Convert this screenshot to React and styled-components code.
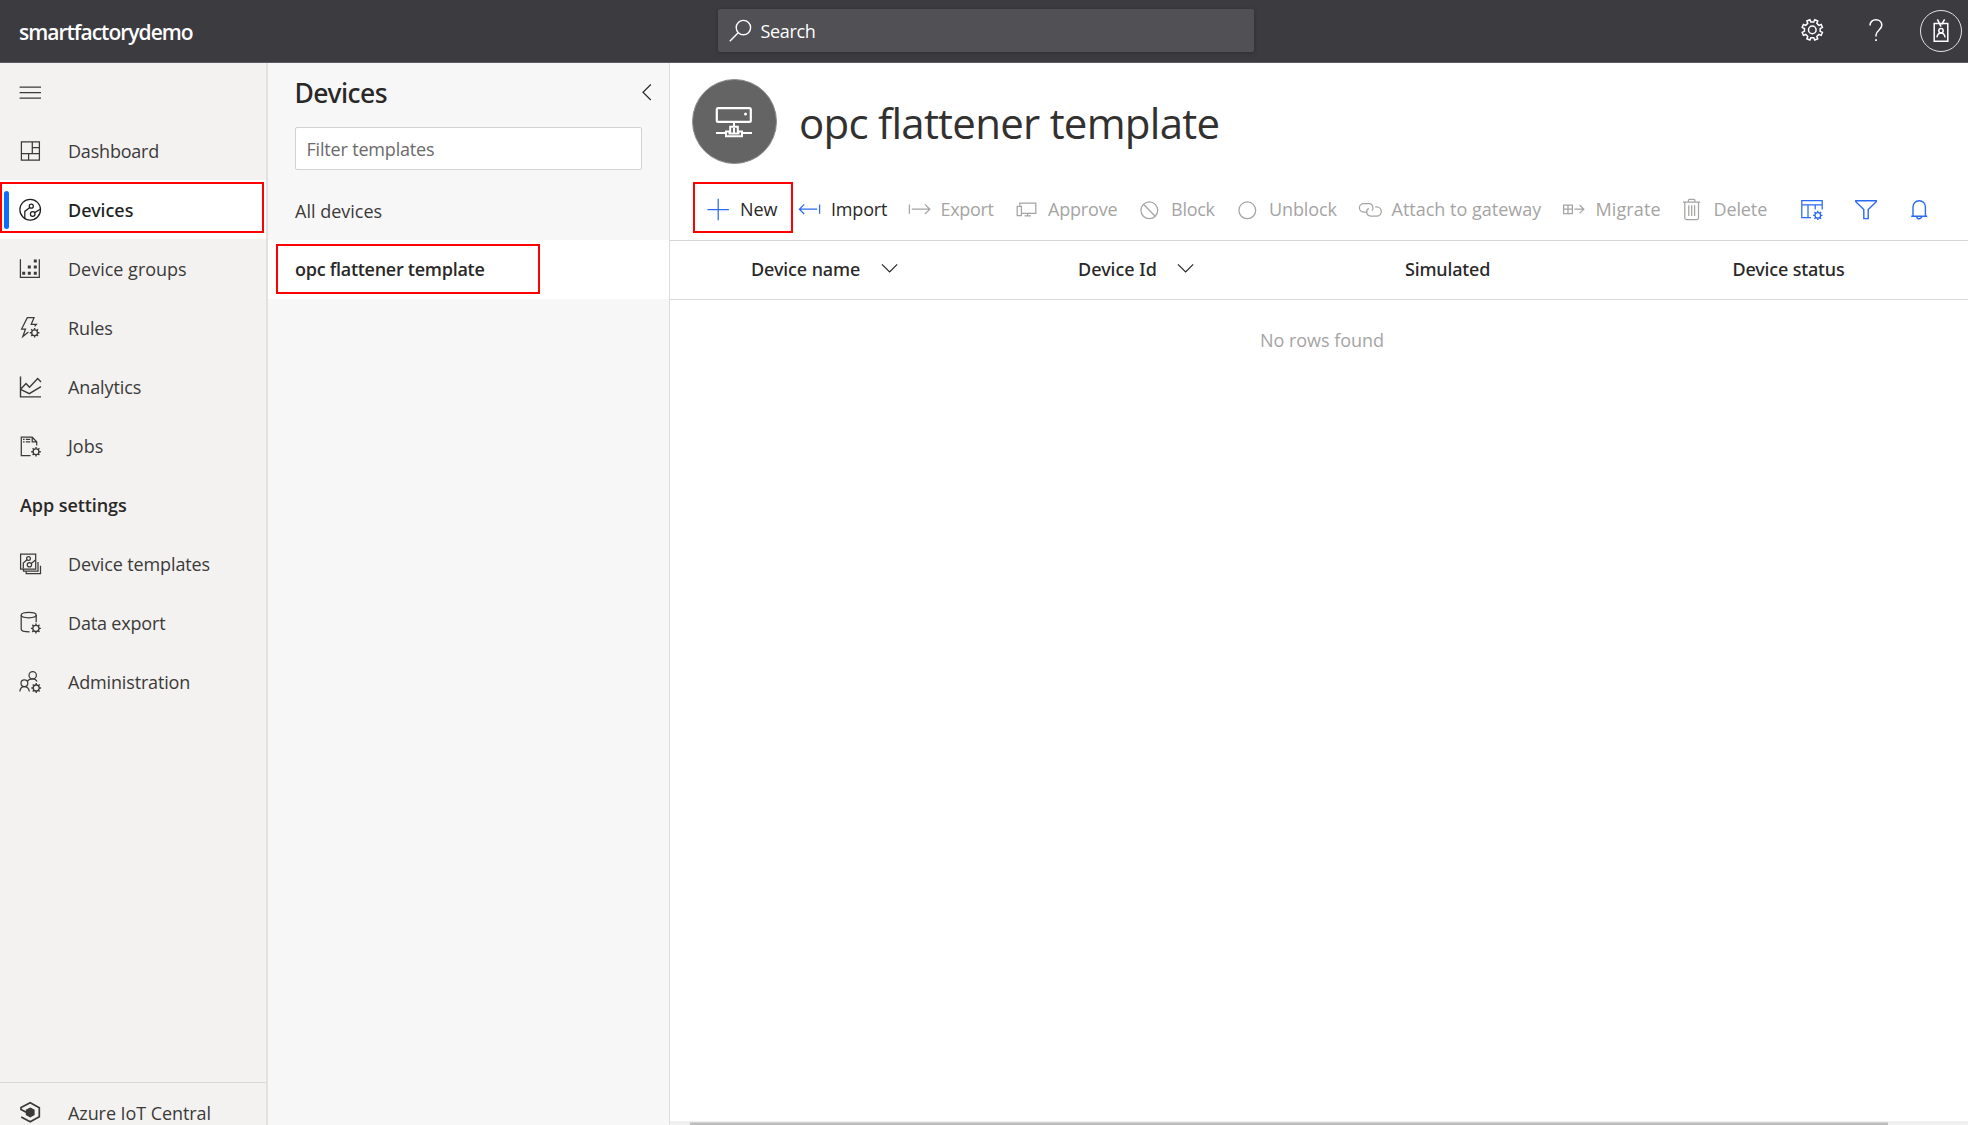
import React from "react";
import styled, { createGlobalStyle } from "styled-components";

const regular = `"Open Sans", "Noto Sans", sans-serif`;
const medium = `"Noto Sans", "Open Sans", sans-serif`;

const GlobalStyle = createGlobalStyle`
  *, *::before, *::after { box-sizing: border-box; }
  html, body, #root { height: 100%; }
  body {
    margin: 0;
    overflow: hidden;
    background: #fff;
    color: #3b3a39;
    font-family: ${regular};
    font-size: 18px;
    line-height: 24px;
  }
`;

/* ---------- shared parts ---------- */

const Label = styled.span`
  display: block;
  white-space: pre;
  letter-spacing: ${(p) => p.$ls || 0}px;
  font-family: ${(p) => (p.$strong ? medium : regular)};
  font-weight: ${(p) => (p.$bold ? 600 : p.$strong ? 500 : 400)};
`;

const Glyph = styled.svg`
  display: block;
  flex: none;
  width: ${(p) => p.$w || 26}px;
  height: ${(p) => p.$h || 26}px;
  fill: none;
  stroke: currentColor;
  stroke-width: ${(p) => p.$sw || 1.25};
  overflow: visible;
`;

const polar = (cx, cy, r, a) =>
  `${(cx + r * Math.cos(a)).toFixed(2)} ${(cy + r * Math.sin(a)).toFixed(2)}`;

function gearOutline(cx, cy, inner, outer, teeth) {
  const step = (Math.PI * 2) / teeth;
  const pts = [];
  for (let i = 0; i < teeth; i++) {
    const a = i * step - Math.PI / 2 + step / 2;
    pts.push(polar(cx, cy, inner, a - step * 0.27));
    pts.push(polar(cx, cy, outer, a - step * 0.2));
    pts.push(polar(cx, cy, outer, a + step * 0.2));
    pts.push(polar(cx, cy, inner, a + step * 0.27));
  }
  return `M${pts.join("L")}Z`;
}

function MiniGear({ cx, cy, r = 3, rot = 0 }) {
  const teeth = Array.from({ length: 8 }, (_, i) => {
    const a = (i * Math.PI) / 4 + rot;
    return `M${polar(cx, cy, r, a)}L${polar(cx, cy, r + 1.9, a)}`;
  }).join("");
  return (
    <>
      <circle cx={cx} cy={cy} r={r} strokeWidth="1.3" />
      <path d={teeth} strokeWidth="1.4" />
    </>
  );
}

/* ---------- top bar ---------- */

const TopBar = styled.header`
  display: flex;
  align-items: flex-start;
  height: 63px;
  flex: none;
  background: #3c3b40;
  border-bottom: 1px solid #5d5b63;
  color: #fff;
`;

const Brand = styled.div`
  width: 718px;
  padding: 17px 0 0 19px;
  font-size: 21px;
  line-height: 30px;
`;

const SearchBox = styled.div`
  display: flex;
  align-items: center;
  width: 536px;
  height: 43px;
  margin-top: 9px;
  padding-left: 11px;
  gap: 8.5px;
  border-radius: 2px;
  background: #505055;
  box-shadow: 0 1px 4px rgba(0, 0, 0, 0.25);
`;

const TopActions = styled.div`
  display: flex;
  align-items: center;
  height: 61px;
  margin-left: auto;
  padding-right: 6px;
`;

const TopAction = styled.div`
  width: ${(p) => p.$w}px;
`;

const Avatar = styled.div`
  display: grid;
  place-items: center;
  width: 42px;
  height: 42px;
  border: 1.5px solid #e4e4e4;
  border-radius: 50%;
`;

/* ---------- body ---------- */

const Shell = styled.div`
  display: flex;
  flex-direction: column;
  height: 1125px;
  overflow: hidden;
`;

const Body = styled.div`
  display: flex;
  flex: 1;
  min-height: 0;
`;

const Nav = styled.nav`
  display: flex;
  flex-direction: column;
  width: 268px;
  flex: none;
  background: #f3f2f1;
  border-right: 2px solid #e1e1e1;
`;

const MenuToggle = styled.div`
  display: flex;
  align-items: center;
  height: 58px;
  padding: 0 0 1px 18px;
`;

const NavRow = styled.div`
  position: relative;
  display: flex;
  align-items: center;
  flex: none;
  height: 59px;
  padding: 0 0 0 18px;
  gap: 24px;
  background: ${(p) => (p.$active ? "#fff" : "transparent")};
  color: ${(p) => (p.$active ? "#201f1e" : "#3b3a39")};

  & > svg { margin-top: 1px; }
`;

const ActiveBar = styled.span`
  position: absolute;
  left: 4px;
  top: 11px;
  width: 5px;
  height: 38px;
  border-radius: 3px;
  background: #0f6bff;
`;

const Callout = styled.span`
  position: absolute;
  left: ${(p) => p.$x}px;
  top: ${(p) => p.$y}px;
  width: ${(p) => p.$w}px;
  height: ${(p) => p.$h}px;
  border: 2px solid #f00;
  pointer-events: none;
`;

const SectionTitle = styled.div`
  height: 59px;
  padding: 18px 0 0 20px;
  color: #292827;
`;

const NavFooter = styled.div`
  height: 43px;
  margin-top: auto;
  overflow: hidden;
  border-top: 1px solid #dad9d8;
`;

/* ---------- template panel ---------- */

const Panel = styled.aside`
  display: flex;
  flex-direction: column;
  width: 402px;
  flex: none;
  background: #f7f7f7;
  border-right: 1px solid #dcdcdc;
`;

const PanelHead = styled.div`
  display: flex;
  justify-content: space-between;
  height: 64px;
  padding: 12px 17px 0 26.5px;
  color: #292827;
  font-size: 26.5px;
  line-height: 36px;

  & > svg { margin-top: 1px; }
`;

const FilterField = styled.div`
  display: flex;
  align-items: center;
  height: 43px;
  margin: 0 27px 18px 26.5px;
  padding: 0 0 0 11px;
  border: 1px solid #d2d2d2;
  border-radius: 2px;
  background: #fff;
  color: #6b6a69;
`;

const TemplateRow = styled.div`
  position: relative;
  display: flex;
  align-items: center;
  height: ${(p) => (p.$active ? 59 : 52)}px;
  padding: 0 0 ${(p) => (p.$active ? 1 : 7)}px 27px;
  background: ${(p) => (p.$active ? "#fff" : "transparent")};
  color: ${(p) => (p.$active ? "#292827" : "#3b3a39")};
`;

/* ---------- main ---------- */

const Main = styled.main`
  display: flex;
  flex-direction: column;
  flex: 1;
  min-width: 0;
`;

const TitleRow = styled.div`
  display: flex;
  height: 117px;
  flex: none;
  padding: 16px 0 0 22px;
  gap: 22px;
  color: #323130;
`;

const DeviceBadge = styled.div`
  display: grid;
  place-items: center;
  width: 85px;
  height: 85px;
  padding: 4px 2px 0 0;
  border: 1px solid #8e8e8e;
  border-radius: 50%;
  background: #646464;
  color: #fff;
`;

const Title = styled.h1`
  margin: 0;
  padding-top: 16px;
  font-size: 42px;
  font-weight: 400;
  line-height: 56px;
`;

const Toolbar = styled.div`
  position: relative;
  display: flex;
  align-items: center;
  height: 61px;
  flex: none;
  padding-left: 36px;
  border-bottom: 1px solid #d6d6d6;
`;

const Command = styled.div`
  display: flex;
  align-items: center;
  flex: none;
  width: ${(p) => p.$w}px;
  margin-top: -2px;
  gap: ${(p) => p.$gap ?? 9}px;
  color: ${(p) => (p.$disabled ? "#a5a4a3" : "#292827")};

  & > svg { color: ${(p) => (p.$disabled ? "#a5a4a3" : "#2b6af5")}; }
`;

const HeadRow = styled.div`
  display: grid;
  grid-template-columns: 327px 327px 327.5px 1fr;
  align-items: center;
  height: 59px;
  flex: none;
  padding: 0 0 2px 81px;
  border-bottom: 1px solid #d9d9d9;
  color: #292827;
`;

const HeadCell = styled.div`
  display: flex;
  align-items: center;
  gap: 20.5px;
`;

const Empty = styled.div`
  display: flex;
  flex: 1;
  justify-content: center;
  padding: 28px 0 0 6px;
  color: #a5a4a3;
`;

const ScrollTrack = styled.div`
  height: 4px;
  flex: none;
  padding: 1px 80px 0 20px;
  background: #f0f0f0;
`;

const ScrollThumb = styled.div`
  height: 3px;
  background: #bdbdbd;
  border-top: 1px solid #d2d2d2;
`;

/* ---------- navigation data ---------- */

const navIcons = {
  dashboard: (
    <path d="M3.4 3.8H21.4V22H3.4ZM14.3 3.8V15.7M14.3 9.5H21.4M3.4 15.7H21.4M10.6 15.7V22" />
  ),
  devices: (
    <>
      <circle cx="12.2" cy="12.7" r="10.3" />
      <circle cx="13.3" cy="9.2" r="2" />
      <circle cx="14.7" cy="17" r="2.3" />
      <path d="M6.8 21.3V14.4L11.8 10.6M16.6 15.6L22.2 12.2" />
    </>
  ),
  groups: (
    <>
      <path d="M2.4 3.3V21.3H21.3V3.3" />
      <path
        d="M15.8 5H18.8M9.8 11H12.8M15.8 11H18.8M4.2 17.2H7.2M9.8 17.2H12.8M15.8 17.2H18.8"
        strokeWidth="3"
      />
    </>
  ),
  rules: (
    <>
      <path d="M10.4 17L4.8 21.6L7.5 14H3.6L9.3 2.7H16L13.2 9.4H18.4L16.6 11.4" />
      <MiniGear cx={16.6} cy={17.7} r={2.9} />
    </>
  ),
  analytics: (
    <path
      d="M2.5 2.4V22.9H23M2.6 15.3L8 9.5L11.5 13.3L19.7 4.6L23 8M2.6 15.3L11.3 19.7L23 12.7"
      strokeWidth="1.4"
    />
  ),
  jobs: (
    <>
      <path d="M12.6 22.5H3.3V4.2H14.2L18.7 8.8V12.4M14.2 4.2V8.8H18.7" />
      <path d="M5 6.4H6.6M7.8 6.4H12.2M5 8.9H6.6M7.8 8.9H12.2" />
      <MiniGear cx={18} cy={18.7} r={2.9} />
    </>
  ),
  templates: (
    <>
      <path d="M2.6 3.2H17.7V18H2.6ZM5.5 18V20.2H20V11M8.2 20.2V22.7H22.5V14.7" />
      <circle cx="10.5" cy="7.4" r="1.9" />
      <circle cx="11.4" cy="13.7" r="2.2" />
      <path d="M5.3 17.5V12L9 8.7M13.2 12.4L17.5 9" />
    </>
  ),
  dataExport: (
    <>
      <ellipse cx="10.7" cy="5.1" rx="7.5" ry="2.7" />
      <path d="M3.2 5V19.2C3.2 20.8 6.5 21.8 11.6 21.8M18.2 5V12.2" />
      <MiniGear cx={17.9} cy={18.4} r={3.1} />
    </>
  ),
  admin: (
    <>
      <circle cx="14.7" cy="6.2" r="3.7" />
      <circle cx="6.4" cy="14.3" r="3.4" />
      <path d="M1.8 22.5C2.2 19.5 4 17.7 6.4 17.7S10.8 19.5 11.4 22.5M9.4 12C10.6 10.6 12.6 9.9 14.7 9.9C16.8 9.9 18.2 10.8 19 12.6" />
      <MiniGear cx={18.2} cy={19} r={3} />
    </>
  ),
  iot: (
    <>
      <path
        d="M8.2 12.2L3 9.4V7.6L12.2 2.8L21.3 7.8V16.8L12.2 21.8L3.2 16.9"
        strokeWidth="1.7"
      />
      <path
        d="M12.2 8.1L16 10.2V14.6L12.2 16.7L8.4 14.6V10.2Z"
        fill="currentColor"
      />
    </>
  ),
};

const primaryNav = [
  { icon: "dashboard", text: "Dashboard", ls: -0.2 },
  { icon: "devices", text: "Devices", ls: 0 },
  { icon: "groups", text: "Device groups", ls: 0 },
  { icon: "rules", text: "Rules", ls: -0.12 },
  { icon: "analytics", text: "Analytics", ls: -0.11 },
  { icon: "jobs", text: "Jobs", ls: 0 },
].map((item) => ({ ...item, active: item.icon === "devices" }));

const settingsNav = [
  { icon: "templates", text: "Device templates", ls: -0.12 },
  { icon: "dataExport", text: "Data export", ls: -0.17 },
  { icon: "admin", text: "Administration", ls: -0.16 },
];

function NavItem({ icon, text, ls, active }) {
  return (
    <NavRow $active={active}>
      <Glyph viewBox="0 0 26 26">{navIcons[icon]}</Glyph>
      <Label $ls={ls} $strong={active}>{text}</Label>
      {active && <ActiveBar />}
      {active && <Callout $x={0} $y={2} $w={264} $h={51} />}
    </NavRow>
  );
}

/* ---------- toolbar data ---------- */

const commands = [
  {
    text: "New", w: 92, gap: 10, ls: -0.08,
    icon: <path d="M12.2 1.7V23.2M1.4 12.6H22.9" />,
  },
  {
    text: "Import", w: 109.5, ls: -0.18,
    icon: <path d="M19.2 12.2H1.4M6.2 7.4L1.4 12.2L6.2 17M21.6 7.6V16.8" />,
  },
  {
    text: "Export", w: 107, ls: -0.34, disabled: true,
    icon: <path d="M3.8 12.2H21.8M17 7.4L21.8 12.2L17 17M1.4 7.6V16.8" />,
  },
  {
    text: "Approve", w: 122.5, ls: -0.18, gap: 9.5, disabled: true,
    icon: <path d="M4.8 8.6V6.2H20.8V16.4H6.6M2.2 9.4H6.4V18.6H2.2ZM12.5 16.4V18.8M9.5 18.8H15.8" />,
  },
  {
    text: "Block", w: 98, ls: -0.25, gap: 10, disabled: true,
    icon: (
      <>
        <circle cx="12.3" cy="13.3" r="8.4" />
        <path d="M6.4 7.3L18.2 19.3" />
      </>
    ),
  },
  {
    text: "Unblock", w: 123, ls: -0.12, gap: 10, disabled: true,
    icon: <circle cx="12.3" cy="13.3" r="8.4" />,
  },
  {
    text: "Attach to gateway", w: 204, ls: 0, gap: 9.5, disabled: true,
    icon: (
      <path d="M8.2 15H5.6A4.1 4.1 0 0 1 5.6 6.6H11A4.1 4.1 0 0 1 13.8 13.6M17.2 9.8H18.6A4.6 4.6 0 0 1 18.6 19.1H12.6A4.1 4.1 0 0 1 10.8 11.4" />
    ),
  },
  {
    text: "Migrate", w: 118, ls: 0.12, gap: 9.5, disabled: true,
    icon: (
      <path d="M1.6 8H10.4V16.6H1.6ZM6 8V16.6M1.6 12.2H10.4M12.4 12.2H21.8M17.6 8L21.8 12.2L17.6 16.4" />
    ),
  },
  {
    text: "Delete", w: 120, ls: -0.12, gap: 9.5, disabled: true,
    icon: (
      <path d="M3 5.1H20.2M4.8 5.3V21.1Q4.8 22.6 6.3 22.6H17Q18.5 22.6 18.5 21.1V5.3M8.4 5.1V3.5Q8.4 2.3 9.6 2.3H13.7Q14.9 2.3 14.9 3.5V5.1M8.8 8.3V19.1M11.7 8.3V19.1M14.6 8.3V19.1" />
    ),
  },
];

const columns = [
  { text: "Device name", ls: -0.1, sortable: true },
  { text: "Device Id", ls: 0, sortable: true },
  { text: "Simulated", ls: -0.16 },
  { text: "Device status", ls: -0.17 },
];

function GatewayIcon() {
  return (
    <Glyph $w={38} $h={36} $sw={2.2} viewBox="0 0 38 36">
      <path d="M3.2 2.2H34.4Q35.8 2.2 35.8 3.6V14.4Q35.8 15.8 34.4 15.8H3.2Q1.8 15.8 1.8 14.4V3.6Q1.8 2.2 3.2 2.2Z" />
      <path d="M19 16V20M1 27H10.5M27.5 27H37M11 30.2V25.6H15.2V20.8H22.8V25.6H27V30.2ZM13.5 27.6H24.5M19 22V27" strokeWidth="2" />
      <circle cx="30.5" cy="8" r="1.5" fill="currentColor" stroke="none" />
    </Glyph>
  );
}

export default function App() {
  return (
    <Shell>
      <GlobalStyle />
      <TopBar>
        <Brand>
          <Label $bold $ls={-0.99}>smartfactorydemo</Label>
        </Brand>
        <SearchBox>
          <Glyph $w={23} $h={24} $sw={1.4} viewBox="0 0 23 24">
            <circle cx="14.4" cy="8.6" r="7.2" />
            <path d="M9.2 13.8L0.8 22.3" />
          </Glyph>
          <Label $ls={-0.32}>Search</Label>
        </SearchBox>
        <TopActions>
          <TopAction $w={68.5}>
            <Glyph $w={23} $h={23} $sw={1.5} viewBox="0 0 23 23">
              <path d={gearOutline(11.3, 10.9, 8, 10.4, 8)} />
              <circle cx="11.3" cy="10.9" r="3.8" />
            </Glyph>
          </TopAction>
          <TopAction $w={51}>
            <Glyph $w={14} $h={23} $sw={1.5} viewBox="0 0 14 23">
              <path d="M1 6.6C1 3 3.4 0.8 6.9 0.8S12.8 3 12.8 6.3C12.8 11 7 11.4 7 16V17.6" />
              <path d="M7 20.2V22" strokeWidth="1.8" />
            </Glyph>
          </TopAction>
          <Avatar>
            <Glyph $w={16} $h={24} $sw={1.5} viewBox="0 0 16 24">
              <path d="M1.2 4.6H14.8V22.2H1.2ZM4.4 0.4L8 7.6M11.6 0.4L8.6 5.6" />
              <circle cx="8" cy="11.8" r="2.2" />
              <path d="M3.9 18.4C4.4 15.6 6 14.1 8 14.1S11.6 15.6 12.1 18.4" />
            </Glyph>
          </Avatar>
        </TopActions>
      </TopBar>

      <Body>
        <Nav>
          <MenuToggle>
            <Glyph viewBox="0 0 26 26">
              <path d="M1.6 8H23M1.6 13.5H23M1.6 19H23" />
            </Glyph>
          </MenuToggle>
          {primaryNav.map((item) => <NavItem key={item.icon} {...item} />)}
          <SectionTitle>
            <Label $bold $ls={-0.07}>App settings</Label>
          </SectionTitle>
          {settingsNav.map((item) => <NavItem key={item.icon} {...item} />)}
          <NavFooter>
            <NavItem icon="iot" text="Azure IoT Central" ls={-0.08} />
          </NavFooter>
        </Nav>

        <Panel>
          <PanelHead>
            <Label $strong $ls={-0.52}>Devices</Label>
            <Glyph $w={10} $h={32} $sw={1.2} viewBox="0 0 10 32">
              <path d="M8.8 8.5L1 16.3L8.8 24" />
            </Glyph>
          </PanelHead>
          <FilterField>
            <Label $ls={-0.18}>Filter templates</Label>
          </FilterField>
          <TemplateRow>
            <Label>All devices</Label>
          </TemplateRow>
          <TemplateRow $active>
            <Label $bold $ls={-0.27}>opc flattener template</Label>
            <Callout $x={8} $y={4} $w={264} $h={50} />
          </TemplateRow>
        </Panel>

        <Main>
          <TitleRow>
            <DeviceBadge>
              <GatewayIcon />
            </DeviceBadge>
            <Title>
              <Label $ls={-0.74}>opc flattener template</Label>
            </Title>
          </TitleRow>
          <Toolbar>
            {commands.map(({ text, w, gap, ls, disabled, icon }) => (
              <Command key={text} $w={w} $gap={gap} $disabled={disabled}>
                <Glyph $w={24} $h={24} viewBox="0 0 24 24">{icon}</Glyph>
                <Label $ls={ls}>{text}</Label>
              </Command>
            ))}
            <Command $w={53.5}>
              <Glyph $w={24} $h={24} viewBox="0 0 24 24">
                <path d="M11 20.5H1.8V3.6H22.2V12.4M1.8 7.8H22.2M8 7.8V20.5M15.2 7.8V12.6" />
                <MiniGear cx={17.8} cy={18.4} r={2.8} />
              </Glyph>
            </Command>
            <Command $w={53.5}>
              <Glyph $w={24} $h={24} $sw={1.4} viewBox="0 0 24 24">
                <path d="M1.8 3.7H22.3V4.8L14.2 12.6V21.6H9.8V12.6L1.8 4.8Z" />
              </Glyph>
            </Command>
            <Command $w={24}>
              <Glyph $w={24} $h={24} $sw={1.4} viewBox="0 0 24 24">
                <path d="M4.2 19.2H20.2M6 19.2V10A6.2 6.2 0 0 1 18.4 10V19.2M9.8 19.4A2.4 2.4 0 0 0 14.6 19.4" />
              </Glyph>
            </Command>
            <Callout $x={23} $y={2} $w={100} $h={51} />
          </Toolbar>
          <HeadRow>
            {columns.map(({ text, ls, sortable }) => (
              <HeadCell key={text}>
                <Label $strong $ls={ls}>{text}</Label>
                {sortable && (
                  <Glyph $w={17} $h={12} $sw={1.2} viewBox="0 0 17 12">
                    <path d="M1 1.4L8.6 9L16.2 1.4" />
                  </Glyph>
                )}
              </HeadCell>
            ))}
          </HeadRow>
          <Empty>
            <Label $ls={-0.03}>No rows found</Label>
          </Empty>
          <ScrollTrack>
            <ScrollThumb />
          </ScrollTrack>
        </Main>
      </Body>
    </Shell>
  );
}
